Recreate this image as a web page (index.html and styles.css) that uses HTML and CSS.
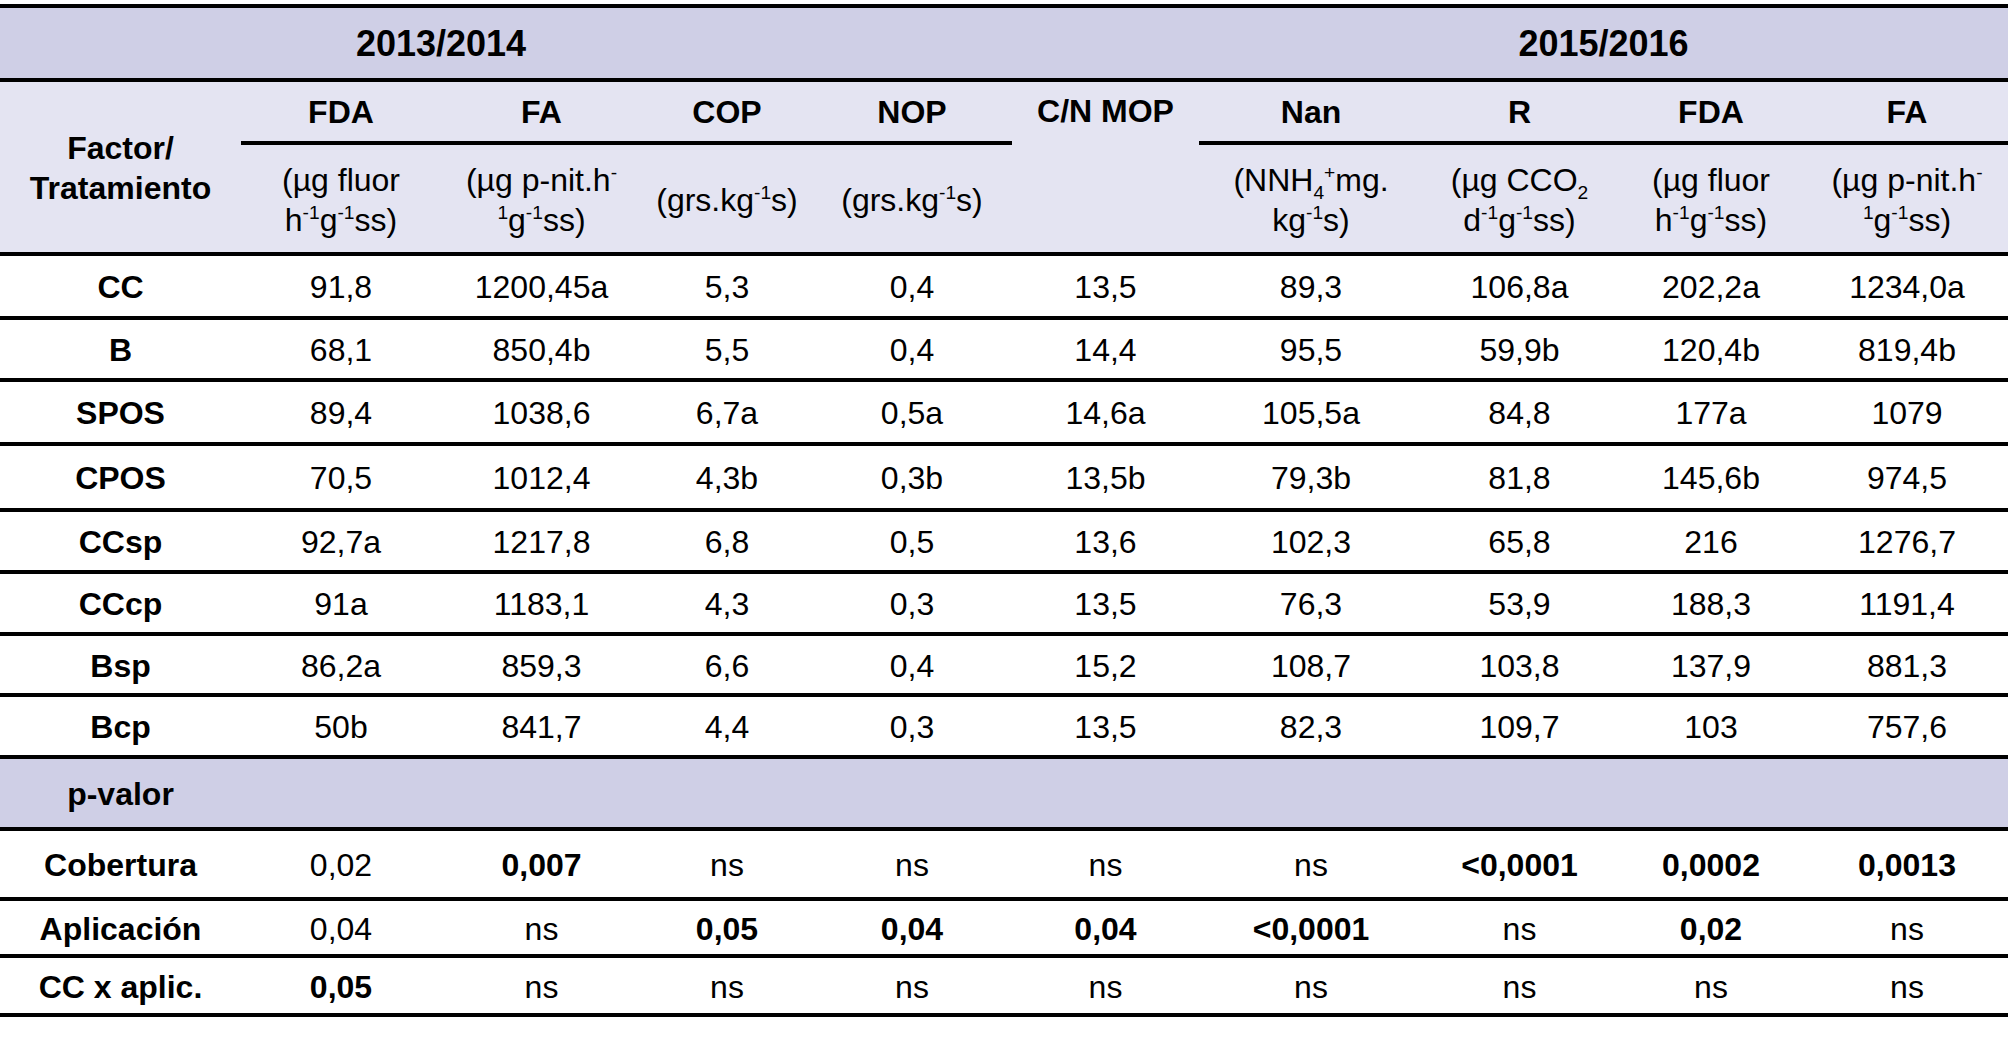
FILE: index.html
```html
<!DOCTYPE html>
<html lang="es">
<head>
<meta charset="utf-8">
<title>Tabla</title>
<link rel="stylesheet" href="styles.css">
</head>
<body>
<div class="tbl">
  <div class="years">
    <div class="yr">2013/2014</div>
    <div></div>
    <div class="yr">2015/2016</div>
  </div>
  <div class="head">
    <div class="factor"><span>Factor/<br>Tratamiento</span></div>
    <div class="nm">FDA</div>
    <div class="nm">FA</div>
    <div class="nm">COP</div>
    <div class="nm">NOP</div>
    <div class="nm cn">C/N MOP</div>
    <div class="nm">Nan</div>
    <div class="nm">R</div>
    <div class="nm">FDA</div>
    <div class="nm">FA</div>
    <div class="un"><span>(µg fluor<br>h<sup>-1</sup>g<sup>-1</sup>ss)</span></div>
    <div class="un"><span>(µg p-nit.h<sup>-</sup><br><sup>1</sup>g<sup>-1</sup>ss)</span></div>
    <div class="un"><span>(grs.kg<sup>-1</sup>s)</span></div>
    <div class="un"><span>(grs.kg<sup>-1</sup>s)</span></div>
    <div class="un"></div>
    <div class="un"><span>(NNH<sub>4</sub><sup>+</sup>mg.<br>kg<sup>-1</sup>s)</span></div>
    <div class="un"><span>(µg CCO<sub>2</sub><br>d<sup>-1</sup>g<sup>-1</sup>ss)</span></div>
    <div class="un"><span>(µg fluor<br>h<sup>-1</sup>g<sup>-1</sup>ss)</span></div>
    <div class="un"><span>(µg p-nit.h<sup>-</sup><br><sup>1</sup>g<sup>-1</sup>ss)</span></div>
  </div>

  <div class="r h60"><div class="lb">CC</div><div>91,8</div><div>1200,45a</div><div>5,3</div><div>0,4</div><div>13,5</div><div>89,3</div><div>106,8a</div><div>202,2a</div><div>1234,0a</div></div>
  <div class="r h58"><div class="lb">B</div><div>68,1</div><div>850,4b</div><div>5,5</div><div>0,4</div><div>14,4</div><div>95,5</div><div>59,9b</div><div>120,4b</div><div>819,4b</div></div>
  <div class="r h60"><div class="lb">SPOS</div><div>89,4</div><div>1038,6</div><div>6,7a</div><div>0,5a</div><div>14,6a</div><div>105,5a</div><div>84,8</div><div>177a</div><div>1079</div></div>
  <div class="r h62"><div class="lb">CPOS</div><div>70,5</div><div>1012,4</div><div>4,3b</div><div>0,3b</div><div>13,5b</div><div>79,3b</div><div>81,8</div><div>145,6b</div><div>974,5</div></div>
  <div class="r h58"><div class="lb">CCsp</div><div>92,7a</div><div>1217,8</div><div>6,8</div><div>0,5</div><div>13,6</div><div>102,3</div><div>65,8</div><div>216</div><div>1276,7</div></div>
  <div class="r h58"><div class="lb">CCcp</div><div>91a</div><div>1183,1</div><div>4,3</div><div>0,3</div><div>13,5</div><div>76,3</div><div>53,9</div><div>188,3</div><div>1191,4</div></div>
  <div class="r h57"><div class="lb">Bsp</div><div>86,2a</div><div>859,3</div><div>6,6</div><div>0,4</div><div>15,2</div><div>108,7</div><div>103,8</div><div>137,9</div><div>881,3</div></div>
  <div class="r h58"><div class="lb">Bcp</div><div>50b</div><div>841,7</div><div>4,4</div><div>0,3</div><div>13,5</div><div>82,3</div><div>109,7</div><div>103</div><div>757,6</div></div>

  <div class="r pv"><div class="lb">p-valor</div></div>

  <div class="r cob"><div class="lb">Cobertura</div><div>0,02</div><div class="b">0,007</div><div>ns</div><div>ns</div><div>ns</div><div>ns</div><div class="b">&lt;0,0001</div><div class="b">0,0002</div><div class="b">0,0013</div></div>
  <div class="r apl"><div class="lb">Aplicación</div><div>0,04</div><div>ns</div><div class="b">0,05</div><div class="b">0,04</div><div class="b">0,04</div><div class="b">&lt;0,0001</div><div>ns</div><div class="b">0,02</div><div>ns</div></div>
  <div class="r ccx"><div class="lb">CC x aplic.</div><div class="b">0,05</div><div>ns</div><div>ns</div><div>ns</div><div>ns</div><div>ns</div><div>ns</div><div>ns</div><div>ns</div></div>
</div>
</body>
</html>
```

FILE: styles.css
```css
html, body {
  margin: 0;
  padding: 0;
  background: #ffffff;
}

body {
  padding-top: 4px;
  font-family: "Liberation Sans", Arial, sans-serif;
  font-size: 32px;
  color: #000;
}

.tbl {
  width: 2008px;
  border-top: 4px solid #000;
}

.years {
  display: grid;
  grid-template-columns: 882px 317px 809px;
  height: 70px;
  background: #cfcfe6;
  border-bottom: 4px solid #000;
}

.yr {
  display: flex;
  align-items: center;
  justify-content: center;
  font-weight: bold;
  font-size: 36px;
  padding-top: 2px;
}

.head,
.r {
  display: grid;
  grid-template-columns: 241px 200px 201px 170px 200px 187px 224px 193px 190px 202px;
}

.head {
  grid-template-rows: 63px 107px;
  background: #e4e4f2;
  border-bottom: 4px solid #000;
}

.factor {
  grid-row: 1 / 3;
  grid-column: 1;
  display: flex;
  align-items: center;
  justify-content: center;
  text-align: center;
  font-weight: bold;
  line-height: 40px;
  padding-top: 2px;
}

.nm {
  display: flex;
  align-items: center;
  justify-content: center;
  font-weight: bold;
  border-bottom: 4px solid #000;
  padding-top: 2px;
}

.nm.cn {
  border-bottom: none;
  align-items: flex-start;
  padding-top: 11px;
}

.un {
  display: flex;
  align-items: center;
  justify-content: center;
  text-align: center;
  line-height: 40px;
  padding-top: 2px;
  white-space: nowrap;
}

sup {
  font-size: 0.6em;
  vertical-align: 0.6em;
  line-height: 0;
}

sub {
  font-size: 0.6em;
  vertical-align: -0.4em;
  line-height: 0;
}

.r {
  height: 59px;
  padding-top: 3px;
  box-sizing: content-box;
  border-bottom: 4px solid #000;
  align-items: center;
  text-align: center;
}

.r.h57 { height: 54px; }
.r.h58 { height: 55px; }
.r.h60 { height: 57px; }
.r.h62 { height: 59px; }

.lb {
  font-weight: bold;
}

.b {
  font-weight: bold;
}

.r.pv {
  height: 65px;
  background: #cfcfe6;
}

.r.cob {
  height: 63px;
}

.r.apl {
  height: 50px;
}

.r.ccx {
  height: 52px;
}
```
